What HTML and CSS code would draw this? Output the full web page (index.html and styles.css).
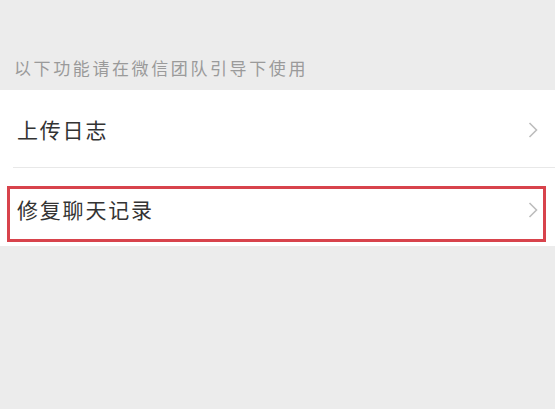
FILE: index.html
```html
<!DOCTYPE html>
<html lang="zh-CN">
<head>
<meta charset="utf-8">
<title>设置</title>
<link rel="stylesheet" href="styles.css">
</head>
<body>
<div class="page">
  <div class="section-title">以下功能请在微信团队引导下使用</div>
  <div class="list">
    <div class="row">
      <span class="label">上传日志</span>
      <svg class="chev" viewBox="0 0 10 16" width="10" height="16"><path d="M1.5 1 L8.5 8 L1.5 15" fill="none" stroke="#bdbdbd" stroke-width="1.6"/></svg>
    </div>
    <div class="row row-last">
      <span class="label">修复聊天记录</span>
      <svg class="chev" viewBox="0 0 10 16" width="10" height="16"><path d="M1.5 1 L8.5 8 L1.5 15" fill="none" stroke="#bdbdbd" stroke-width="1.6"/></svg>
      <div class="highlight"></div>
    </div>
  </div>
</div>
</body>
</html>
```
FILE: styles.css
```css
html, body {
  margin: 0;
  padding: 0;
  background: #ececec;
}
.page {
  width: 555px;
  height: 409px;
  background: #ececec;
  font-family: "Noto Sans CJK SC", "Noto Sans", sans-serif;
}
.section-title {
  height: 90px;
  box-sizing: border-box;
  padding: 57px 0 0 14px;
  font-size: 17px;
  line-height: 22px;
  letter-spacing: 2.6px;
  color: #9a9a9a;
}
.list {
  background: #ffffff;
}
.row {
  position: relative;
  height: 78px;
  display: flex;
  align-items: center;
  justify-content: space-between;
  padding: 0 17px 0 17px;
  box-sizing: border-box;
}
.row::after {
  content: "";
  position: absolute;
  left: 13px;
  right: 0;
  bottom: 0;
  height: 1px;
  background: #e8e8e8;
}
.row-last {
  padding-top: 4px;
}
.row-last::after {
  display: none;
}
.label {
  font-size: 21px;
  line-height: 28px;
  letter-spacing: 1.8px;
  color: #333333;
}
.chev {
  display: block;
  margin-top: 2px;
}
.highlight {
  position: absolute;
  left: 7px;
  right: 9px;
  top: 18px;
  height: 56px;
  box-sizing: border-box;
  border: 3px solid #d8434c;
}
```
